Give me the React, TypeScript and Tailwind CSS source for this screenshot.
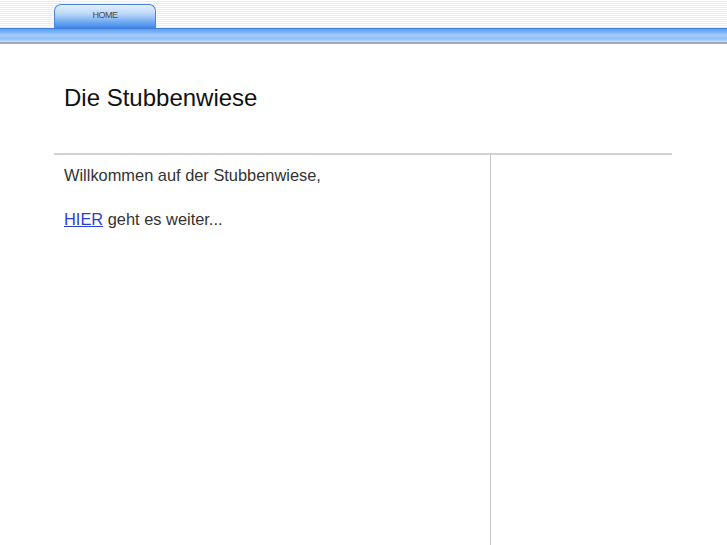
export default function App() {
  return (
    <div className="min-h-[545px] bg-white font-['Liberation_Sans',Arial,sans-serif]">
      {/* top strip with tab */}
      <div className="h-[28px] bg-[repeating-linear-gradient(to_bottom,#ffffff_0px,#ffffff_1px,#ececec_1px,#ececec_2px)] pl-[54px] pt-[4px]">
        <div className="flex h-[24px] w-[102px] items-start justify-center rounded-t-[7px] border border-b-0 border-[#4b84d6] bg-[linear-gradient(to_bottom,#e4f0fd_0%,#b9d6f8_40%,#77aef2_70%,#3f86ea_100%)] pt-[6px]">
          <span className="text-[9px] leading-none tracking-[-0.5px] text-[#4a4a4a]">HOME</span>
        </div>
      </div>

      {/* blue bar */}
      <div className="h-[16px] border-t border-b-2 border-t-[#3c7fdc] border-b-[#9fa7b0] bg-[linear-gradient(to_bottom,#5e9ef0_0%,#7db4f4_25%,#a4cbf8_50%,#8fbdf6_75%,#c3dffc_100%)]" />

      <div className="ml-[54px] w-[618px]">
        <h1 className="pt-[40px] pl-[10px] text-[24px] leading-[28px] text-[#111]">Die Stubbenwiese</h1>

        <div className="mt-[41px] grid grid-cols-[437px_1fr] border-t-2 border-[#d2d2d2]">
          <div className="min-h-[390px] border-r border-[#c4c4c8] pl-[10px] pt-[10px] text-[16.4px] leading-[20px] text-[#333]">
            <p>Willkommen auf der Stubbenwiese,</p>
            <p className="mt-[24px]">
              <a href="#" className="text-[#2a3fd8] underline">HIER</a> geht es weiter...
            </p>
          </div>
          <div />
        </div>
      </div>
    </div>
  );
}
